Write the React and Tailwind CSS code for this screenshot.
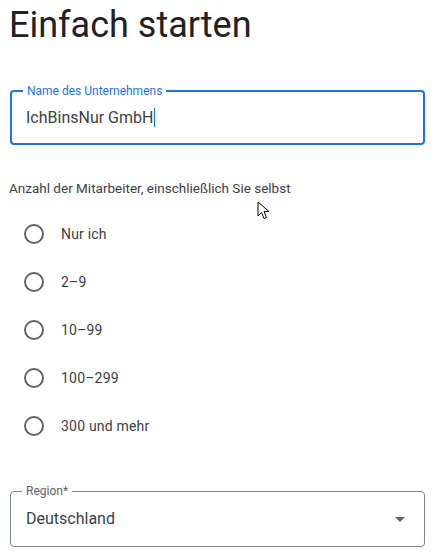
import { useState } from 'react';

const sizes = ['Nur ich', '2–9', '10–99', '100–299', '300 und mehr'];

function Cursor() {
  return (
    <svg className="absolute left-[257px] top-[201px]" width="14" height="20" viewBox="0 0 14 20">
      <path d="M1 1 L1 15 L4.5 11.5 L7 17.5 L9.5 16.5 L7 10.5 L12 10.5 Z" fill="#fff" stroke="#000" strokeWidth="1" strokeLinejoin="round" />
    </svg>
  );
}

export default function App() {
  const [name] = useState('IchBinsNur GmbH');

  return (
    <div className="relative w-[435px] h-[557px] bg-white overflow-hidden font-['Roboto',sans-serif] text-[#3c4043]">
      {/* Title */}
      <h1 className="pl-[9px] pt-[3px] text-[36px] leading-[44px] text-[#202124] font-normal">Einfach starten</h1>

      {/* Company name */}
      <div className="relative mx-[10px] mt-[43px] h-[55px] rounded-[4px] border-2 border-[#1a73e8]">
        <span className="absolute -top-[9px] left-[11px] bg-white px-[4px] text-[12px] leading-[16px] text-[#1a73e8]">
          Name des Unternehmens
        </span>
        <div className="flex items-center h-full pl-[14px] text-[16px] text-[#3c4043]">
          <span>{name}</span>
          <span className="ml-[1px] w-px h-[19px] bg-[#1a73e8]" />
        </div>
      </div>

      {/* Employees */}
      <p className="pl-[9px] mt-[33px] text-[13.5px] leading-[20px] text-[#3c4043]">
        Anzahl der Mitarbeiter, einschließlich Sie selbst
      </p>
      <div className="flex flex-col mt-[12px]">
        {sizes.map((s) => (
          <label key={s} className="flex items-center h-[48px] pl-[24px]">
            <span className="w-[20px] h-[20px] rounded-full border-2 border-[#5f6368]" />
            <span className="ml-[17px] text-[14px] tracking-[0.2px] text-[#3c4043]">{s}</span>
          </label>
        ))}
      </div>

      {/* Region */}
      <div className="relative mx-[10px] mt-[41px] h-[56px] rounded-[4px] border border-[#80868b]">
        <span className="absolute -top-[9px] left-[11px] bg-white px-[4px] text-[12px] leading-[16px] text-[#5f6368]">
          Region*
        </span>
        <div className="flex items-center justify-between h-full pl-[15px] pr-[19px] text-[16px] text-[#3c4043]">
          <span>Deutschland</span>
          <svg width="10" height="5" viewBox="0 0 10 5">
            <path d="M0 0 L10 0 L5 5 Z" fill="#5f6368" />
          </svg>
        </div>
      </div>

      <Cursor />
    </div>
  );
}
